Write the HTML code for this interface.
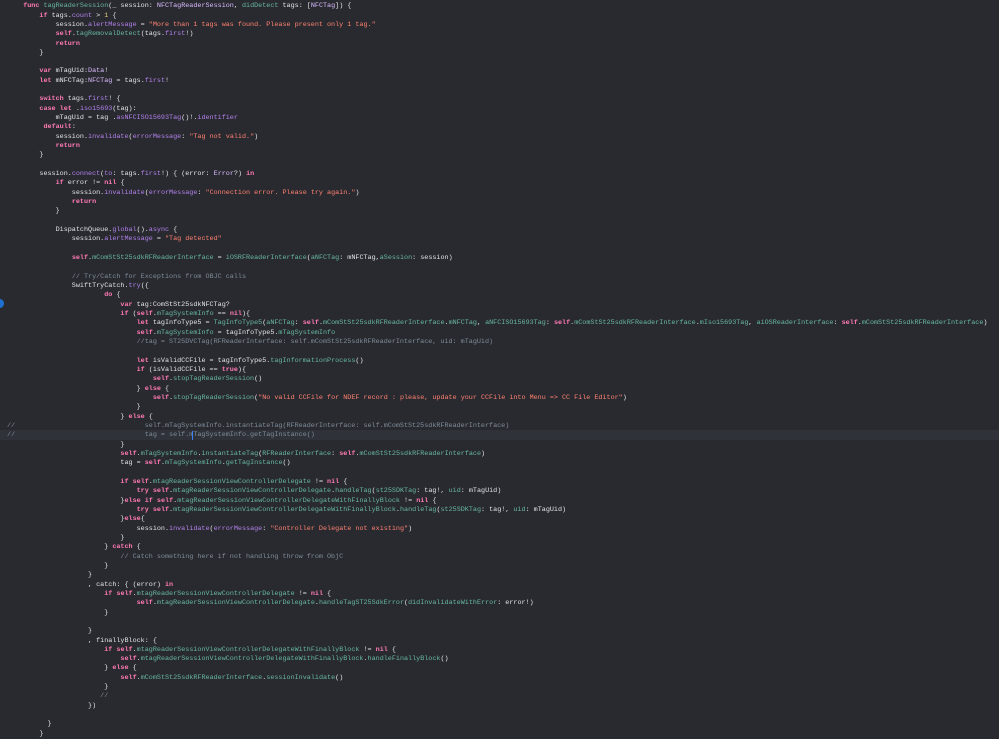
<!DOCTYPE html>
<html><head><meta charset="utf-8"><style>
html,body{margin:0;padding:0;background:#292a30;width:999px;height:738px;overflow:hidden}
pre{position:absolute;left:7px;top:2.2px;margin:0;font-family:"Liberation Mono",monospace;font-size:6.75px;line-height:9.33px;color:#e4e4e6;white-space:pre}
.k{color:#ff7ab2;font-weight:bold}
.s{color:#ff8170}
.p{color:#b281eb}
.t{color:#67b7a4}
.y{color:#dabaff}
.c{color:#7f8c98}
.n{color:#d9c97c}
.hl{position:absolute;left:0;top:430px;width:999px;height:9.5px;background:#2f3239}
.dot{position:absolute;left:-4px;top:299px;width:8px;height:9px;border-radius:50%;background:#1f6fd0}
.cur{position:absolute;left:192px;top:430.5px;width:1px;height:9px;background:#3b82f6}
</style></head><body>
<div class="hl"></div>
<div class="dot"></div>
<pre>    <span class="k">func</span> <span class="t">tagReaderSession</span>(_ session: <span class="y">NFCTagReaderSession</span>, <span class="t">didDetect</span> tags: [<span class="y">NFCTag</span>]) {
        <span class="k">if</span> tags.<span class="p">count</span> &gt; <span class="n">1</span> {
            session.<span class="p">alertMessage</span> = <span class="s">"More than 1 tags was found. Please present only 1 tag."</span>
            <span class="k">self</span>.<span class="t">tagRemovalDetect</span>(tags.<span class="p">first</span>!)
            <span class="k">return</span>
        }

        <span class="k">var</span> mTagUid:<span class="y">Data</span>!
        <span class="k">let</span> mNFCTag:<span class="y">NFCTag</span> = tags.<span class="p">first</span>!

        <span class="k">switch</span> tags.<span class="p">first</span>! {
        <span class="k">case</span> <span class="k">let</span> .<span class="p">iso15693</span>(tag):
            mTagUid = tag .<span class="p">asNFCISO15693Tag</span>()!.<span class="p">identifier</span>
         <span class="k">default</span>:
            session.<span class="p">invalidate</span>(<span class="p">errorMessage</span>: <span class="s">"Tag not valid."</span>)
            <span class="k">return</span>
        }

        session.<span class="p">connect</span>(<span class="p">to</span>: tags.<span class="p">first</span>!) { (error: <span class="y">Error</span>?) <span class="k">in</span>
            <span class="k">if</span> error != <span class="k">nil</span> {
                session.<span class="p">invalidate</span>(<span class="p">errorMessage</span>: <span class="s">"Connection error. Please try again."</span>)
                <span class="k">return</span>
            }

            DispatchQueue.<span class="p">global</span>().<span class="p">async</span> {
                session.<span class="p">alertMessage</span> = <span class="s">"Tag detected"</span>

                <span class="k">self</span>.<span class="t">mComStSt25sdkRFReaderInterface</span> = <span class="t">iOSRFReaderInterface</span>(<span class="t">aNFCTag</span>: mNFCTag,<span class="t">aSession</span>: session)

                <span class="c">// Try/Catch for Exceptions from OBJC calls</span>
                SwiftTryCatch.<span class="p">try</span>({
                        <span class="k">do</span> {
                            <span class="k">var</span> tag:ComStSt25sdkNFCTag?
                            <span class="k">if</span> (<span class="k">self</span>.<span class="t">mTagSystemInfo</span> == <span class="k">nil</span>){
                                <span class="k">let</span> tagInfoType5 = <span class="t">TagInfoType5</span>(<span class="t">aNFCTag</span>: <span class="k">self</span>.<span class="t">mComStSt25sdkRFReaderInterface</span>.<span class="t">mNFCTag</span>, <span class="t">aNFCISO15693Tag</span>: <span class="k">self</span>.<span class="t">mComStSt25sdkRFReaderInterface</span>.<span class="t">mIso15693Tag</span>, <span class="t">aiOSReaderInterface</span>: <span class="k">self</span>.<span class="t">mComStSt25sdkRFReaderInterface</span>)
                                <span class="k">self</span>.<span class="t">mTagSystemInfo</span> = tagInfoType5.<span class="t">mTagSystemInfo</span>
                                <span class="c">//tag = ST25DVCTag(RFReaderInterface: self.mComStSt25sdkRFReaderInterface, uid: mTagUid)</span>

                                <span class="k">let</span> isValidCCFile = tagInfoType5.<span class="t">tagInformationProcess</span>()
                                <span class="k">if</span> (isValidCCFile == <span class="k">true</span>){
                                    <span class="k">self</span>.<span class="t">stopTagReaderSession</span>()
                                } <span class="k">else</span> {
                                    <span class="k">self</span>.<span class="t">stopTagReaderSession</span>(<span class="s">"No valid CCFile for NDEF record : please, update your CCFile into Menu =&gt; CC File Editor"</span>)
                                }
                            } <span class="k">else</span> {
<span class="c">//                                self.mTagSystemInfo.instantiateTag(RFReaderInterface: self.mComStSt25sdkRFReaderInterface)</span>
<span class="c">//                                tag = self.mTagSystemInfo.getTagInstance()</span>
                            }
                            <span class="k">self</span>.<span class="t">mTagSystemInfo</span>.<span class="t">instantiateTag</span>(<span class="t">RFReaderInterface</span>: <span class="k">self</span>.<span class="t">mComStSt25sdkRFReaderInterface</span>)
                            tag = <span class="k">self</span>.<span class="t">mTagSystemInfo</span>.<span class="t">getTagInstance</span>()

                            <span class="k">if</span> <span class="k">self</span>.<span class="t">mtagReaderSessionViewControllerDelegate</span> != <span class="k">nil</span> {
                                <span class="k">try</span> <span class="k">self</span>.<span class="t">mtagReaderSessionViewControllerDelegate</span>.<span class="t">handleTag</span>(<span class="t">st25SDKTag</span>: tag!, <span class="t">uid</span>: mTagUid)
                            }<span class="k">else</span> <span class="k">if</span> <span class="k">self</span>.<span class="t">mtagReaderSessionViewControllerDelegateWithFinallyBlock</span> != <span class="k">nil</span> {
                                <span class="k">try</span> <span class="k">self</span>.<span class="t">mtagReaderSessionViewControllerDelegateWithFinallyBlock</span>.<span class="t">handleTag</span>(<span class="t">st25SDKTag</span>: tag!, <span class="t">uid</span>: mTagUid)
                            }<span class="k">else</span>{
                                session.<span class="p">invalidate</span>(<span class="p">errorMessage</span>: <span class="s">"Controller Delegate not existing"</span>)
                            }
                        } <span class="k">catch</span> {
                            <span class="c">// Catch something here if not handling throw from ObjC</span>
                        }
                    }
                    , catch: { (error) <span class="k">in</span>
                        <span class="k">if</span> <span class="k">self</span>.<span class="t">mtagReaderSessionViewControllerDelegate</span> != <span class="k">nil</span> {
                                <span class="k">self</span>.<span class="t">mtagReaderSessionViewControllerDelegate</span>.<span class="t">handleTagST25SdkError</span>(<span class="t">didInvalidateWithError</span>: error!)
                        }

                    }
                    , finallyBlock: {
                        <span class="k">if</span> <span class="k">self</span>.<span class="t">mtagReaderSessionViewControllerDelegateWithFinallyBlock</span> != <span class="k">nil</span> {
                            <span class="k">self</span>.<span class="t">mtagReaderSessionViewControllerDelegateWithFinallyBlock</span>.<span class="t">handleFinallyBlock</span>()
                        } <span class="k">else</span> {
                            <span class="k">self</span>.<span class="t">mComStSt25sdkRFReaderInterface</span>.<span class="t">sessionInvalidate</span>()
                        }
                       <span class="c">//</span>
                    })

          }
        }</pre>
<div class="cur"></div>
</body></html>
